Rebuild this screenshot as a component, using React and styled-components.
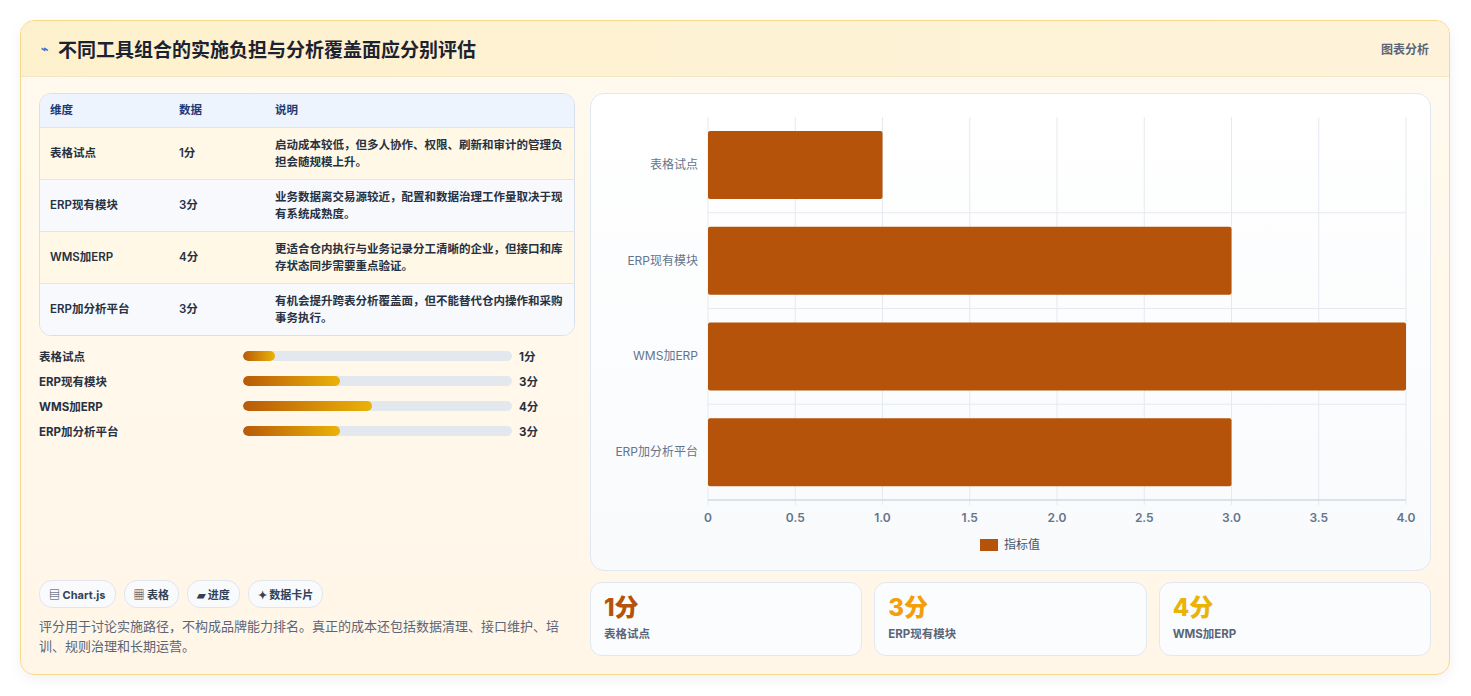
import React from "react";
import styled, { createGlobalStyle } from "styled-components";

const G = createGlobalStyle`
  body{margin:0;background:#fff;font-family:Inter,"Noto Sans CJK SC",sans-serif;}
`;
const Page = styled.div`padding:20px 21px 21px 20px;`;
const Card = styled.div`
  width:1430px;height:655px;box-sizing:border-box;border:1px solid #f6d98a;border-radius:14px;
  background:linear-gradient(180deg,#fffaee,#fff6e8);overflow:hidden;display:flex;flex-direction:column;
  box-shadow:0 4px 14px rgba(0,0,0,.06);
`;
const Header = styled.div`
  height:55px;flex:none;display:flex;align-items:center;justify-content:space-between;padding:0 20px;
  background:linear-gradient(90deg,#fdf1cd,#fef3da);border-bottom:1px solid #f3e6c4;
`;
const Title = styled.h1`margin:0;font-size:19px;font-weight:700;color:#1b2230;display:flex;align-items:center;gap:10px;`;
const Tag = styled.span`font-size:12px;font-weight:700;color:#5b6577;`;
const Body = styled.div`flex:1;display:flex;gap:15px;padding:16px 18px 18px 18px;min-height:0;`;
const Left = styled.div`width:538px;display:flex;flex-direction:column;`;
const Right = styled.div`flex:1;display:flex;flex-direction:column;gap:11px;`;
const Table = styled.div`border:1px solid #d8e0ea;border-radius:12px;overflow:hidden;`;
const Row = styled.div`
  display:grid;grid-template-columns:129px 96px 1fr;padding:0 10px;
  min-height:${p=>p.$h?33:52}px;align-items:center;box-sizing:border-box;
  background:${p=>p.$h?"#edf4fd":p.$alt?"#f7f9fc":"#fff8e6"};
  border-top:${p=>p.$first?"none":"1px solid #e1e6ee"};
  font-size:11.5px;font-weight:${p=>p.$h?700:600};color:${p=>p.$h?"#1e3a74":"#273142"};
  line-height:17px;
`;
const Bars = styled.div`display:flex;flex-direction:column;gap:8px;margin-top:11px;`;
const BarRow = styled.div`display:grid;grid-template-columns:197px 269px 1fr;column-gap:7px;align-items:center;font-size:11.5px;font-weight:700;color:#273142;height:17px;`;
const Track = styled.div`height:10px;border-radius:5px;background:#e3e8ef;overflow:hidden;`;
const Fill = styled.div`height:100%;border-radius:5px;background:linear-gradient(90deg,#b85a08,#eab308);`;
const Chips = styled.div`margin-top:auto;display:flex;gap:8px;`;
const Chip = styled.span`height:26px;padding:0 9px;border:1px solid #e1e6ee;border-radius:13px;background:#f8fafc;display:flex;align-items:center;gap:4px;font-size:11px;font-weight:700;color:#334155;`;
const Note = styled.p`margin:8px 0 0;font-size:13px;line-height:20px;color:#5b6577;`;
const ChartCard = styled.div`height:480px;border:1px solid #e2e8f0;border-radius:14px;background:linear-gradient(180deg,#fff,#f8fafc);overflow:hidden;`;
const Stats = styled.div`display:flex;gap:12px;`;
const Stat = styled.div`flex:1;height:74px;box-sizing:border-box;border:1px solid #e2e8f0;border-radius:12px;background:#fbfcfe;padding:10px 13px;`;
const Big = styled.div`font-size:24px;font-weight:800;color:${p=>p.$c};line-height:30px;`;
const Small = styled.div`font-size:11.5px;font-weight:700;color:#5b6577;margin-top:2px;`;

const rows=[["表格试点","1分","启动成本较低，但多人协作、权限、刷新和审计的管理负担会随规模上升。"],["ERP现有模块","3分","业务数据离交易源较近，配置和数据治理工作量取决于现有系统成熟度。"],["WMS加ERP","4分","更适合仓内执行与业务记录分工清晰的企业，但接口和库存状态同步需要重点验证。"],["ERP加分析平台","3分","有机会提升跨表分析覆盖面，但不能替代仓内操作和采购事务执行。"]];
const vals=[1,3,4,3];

function Chart(){
  const x0=117,x1=815,top=23,bot=406,band=(bot-top)/4,u=(x1-x0)/4;
  const ticks=[0,0.5,1,1.5,2,2.5,3,3.5,4];
  return <svg width="839" height="480">
    {ticks.map(t=><line key={t} x1={x0+t*u} x2={x0+t*u} y1={top} y2={bot+5} stroke="#e5e9f0"/>)}
    {[0,1,2,3].map(i=><line key={i} x1={x0} x2={x1} y1={top+band*(i+1)} y2={top+band*(i+1)} stroke="#e5e9f0"/>)}
    <line x1={x0} x2={x1} y1={bot} y2={bot} stroke="#c9d1dc"/>
    {rows.map((r,i)=><g key={i}>
      <rect x={x0} y={top+band*i+14} width={vals[i]*u} height={68} fill="#b45309" rx="2"/>
      <text x={x0-10} y={top+band*i+band/2+4} textAnchor="end" fontSize="12" fill="#64748b" fontFamily="Inter,'Noto Sans CJK SC',sans-serif">{r[0]}</text>
    </g>)}
    {ticks.map(t=><text key={t} x={x0+t*u} y={428} textAnchor="middle" fontSize="12" fontWeight="600" fill="#64748b" fontFamily="Inter,sans-serif">{t===0?"0":t.toFixed(1)}</text>)}
    <rect x="389" y="445" width="18" height="12" fill="#b45309"/>
    <text x="413" y="455" fontSize="12" fill="#475569" fontFamily="Inter,'Noto Sans CJK SC',sans-serif">指标值</text>
  </svg>;
}

export default function App(){
  return <Page><G/><Card>
    <Header><Title><span style={{fontSize:12,color:"#3b6fd4"}}>⌁</span>不同工具组合的实施负担与分析覆盖面应分别评估</Title><Tag>图表分析</Tag></Header>
    <Body>
      <Left>
        <Table>
          <Row $h $first><span>维度</span><span>数据</span><span>说明</span></Row>
          {rows.map((r,i)=><Row key={i} $alt={i%2===1}><span>{r[0]}</span><span>{r[1]}</span><span>{r[2]}</span></Row>)}
        </Table>
        <Bars>{rows.map((r,i)=><BarRow key={i}><span>{r[0]}</span><Track><Fill style={{width:[12,36,48,36][i]+"%"}}/></Track><span>{r[1]}</span></BarRow>)}</Bars>
        <Chips><Chip>▤ Chart.js</Chip><Chip>▦ 表格</Chip><Chip>▰ 进度</Chip><Chip>✦ 数据卡片</Chip></Chips>
        <Note>评分用于讨论实施路径，不构成品牌能力排名。真正的成本还包括数据清理、接口维护、培训、规则治理和长期运营。</Note>
      </Left>
      <Right>
        <ChartCard><Chart/></ChartCard>
        <Stats>
          <Stat><Big $c="#b45309">1分</Big><Small>表格试点</Small></Stat>
          <Stat><Big $c="#f59e0b">3分</Big><Small>ERP现有模块</Small></Stat>
          <Stat><Big $c="#eab308">4分</Big><Small>WMS加ERP</Small></Stat>
        </Stats>
      </Right>
    </Body>
  </Card></Page>;
}
